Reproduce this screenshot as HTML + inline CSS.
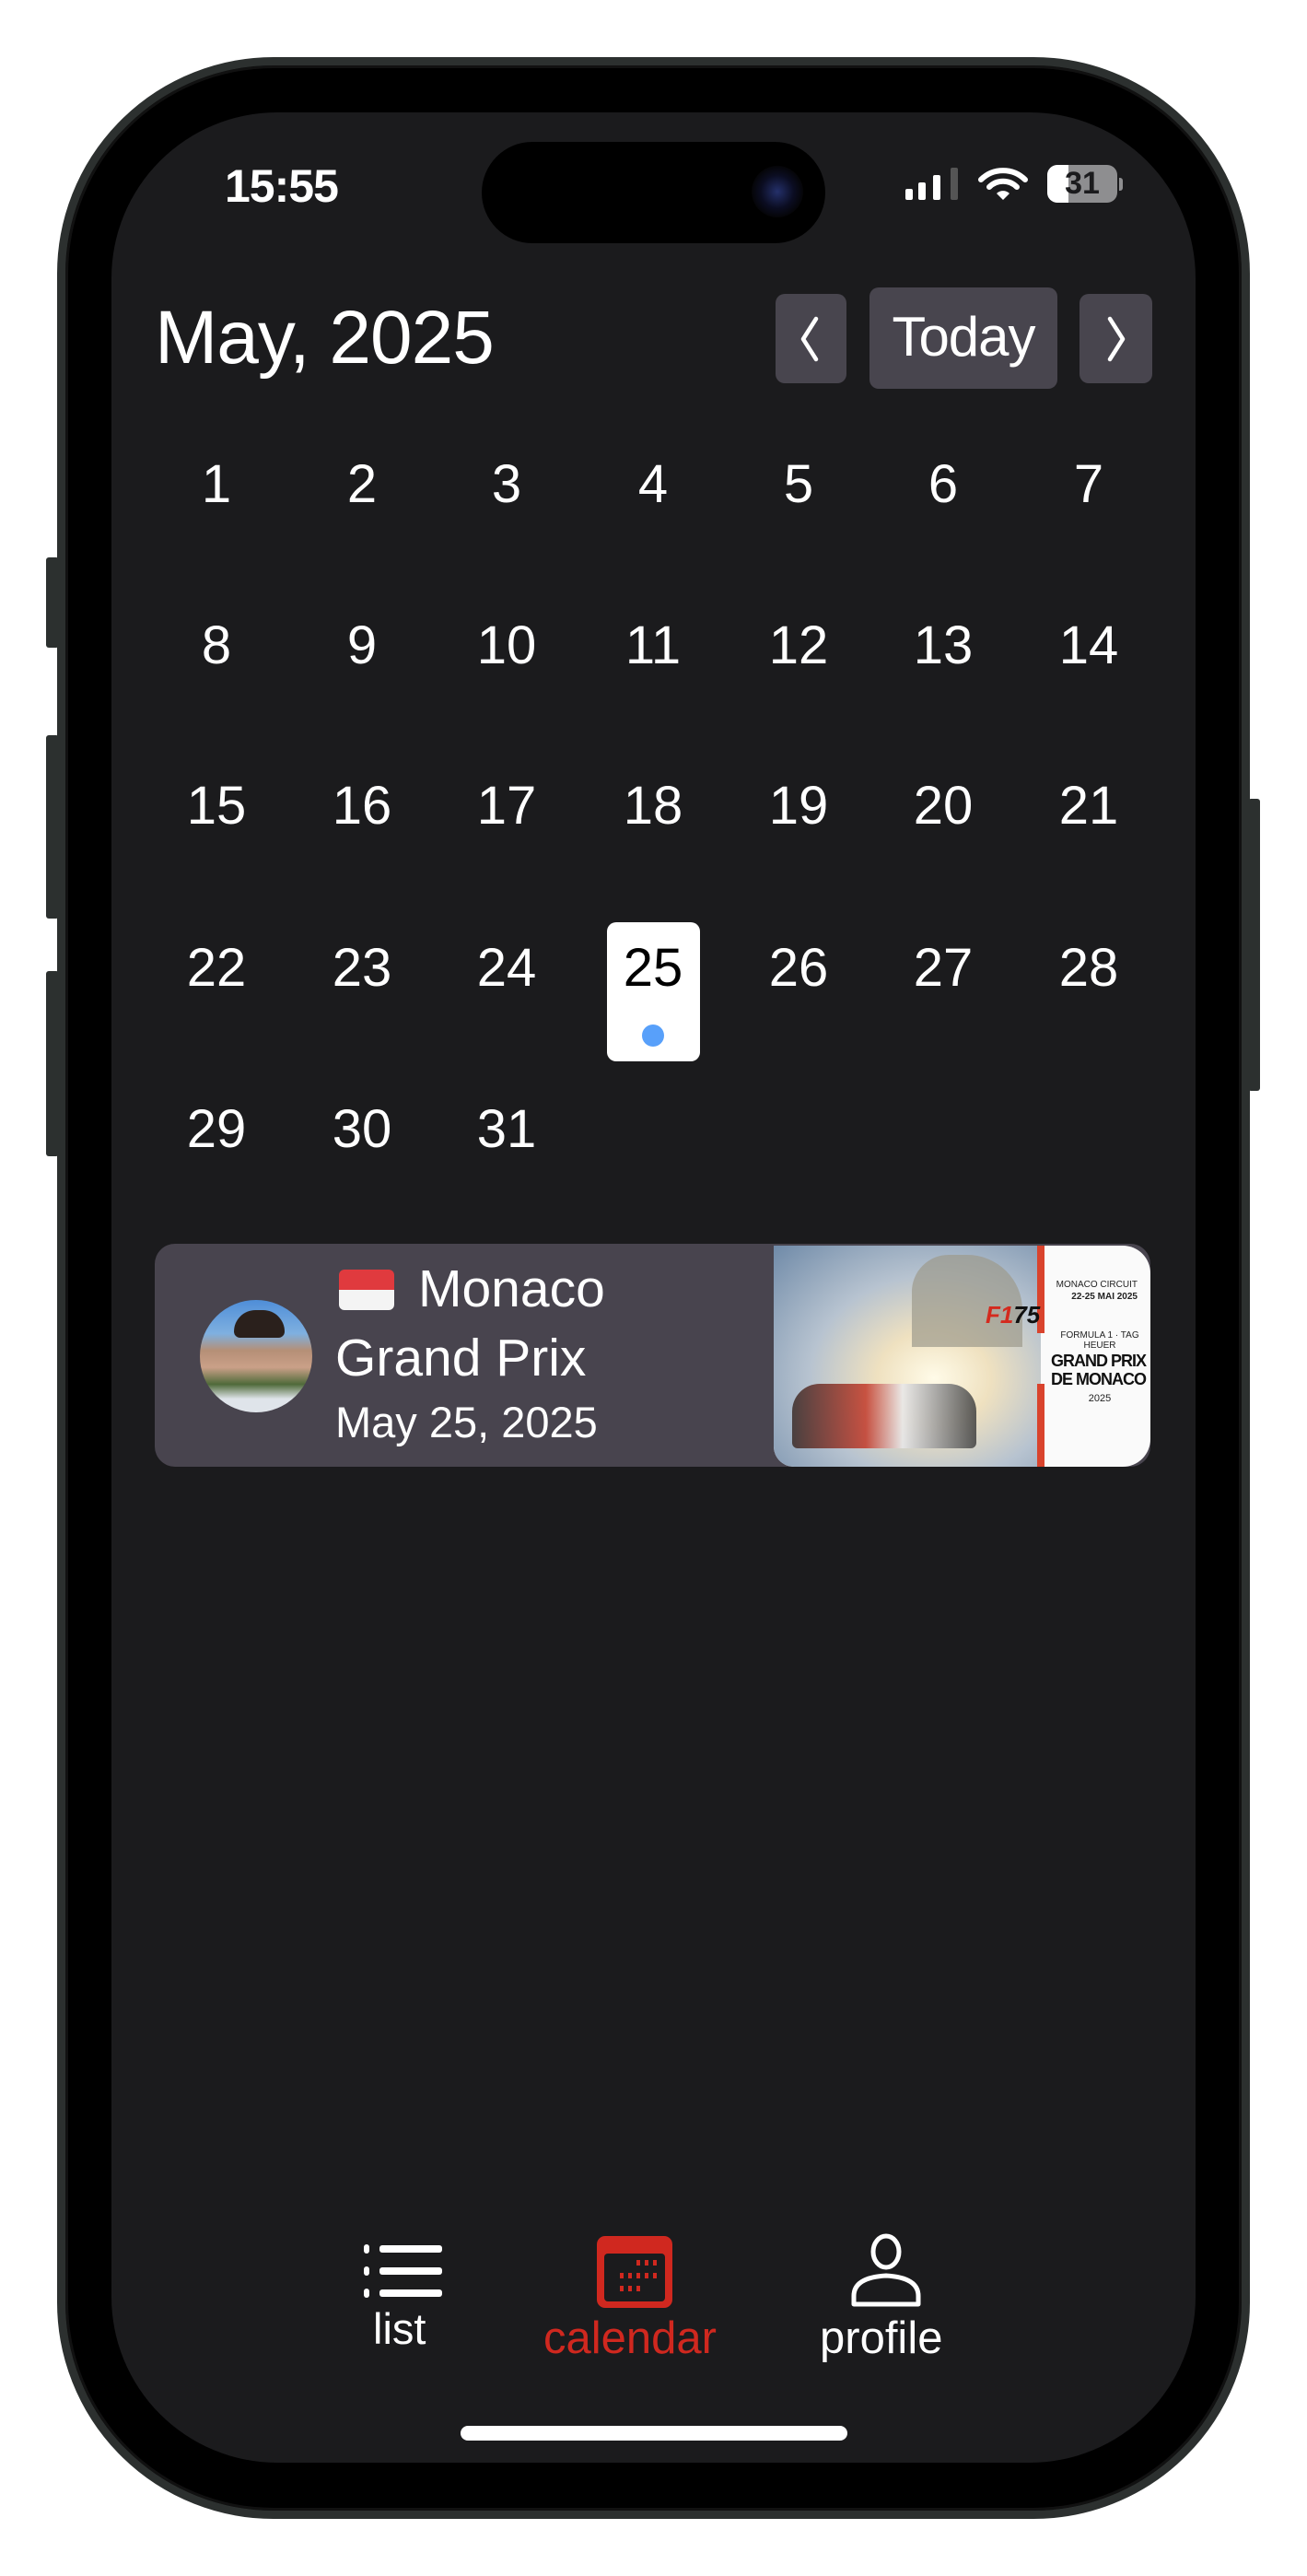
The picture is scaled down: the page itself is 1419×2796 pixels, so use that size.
<!DOCTYPE html>
<html><head><meta charset="utf-8">
<style>
*{margin:0;padding:0;box-sizing:border-box}
body{width:1419px;height:2796px;background:#fff;position:relative;overflow:hidden;font-family:"Liberation Sans",Arial,sans-serif}
.abs{position:absolute}
.frame{left:62px;top:62px;width:1295px;height:2672px;border-radius:235px;background:#000;border:9px solid #2c302f;box-shadow:inset 0 0 0 3px #111}
.screen{left:121px;top:122px;width:1177px;height:2551px;border-radius:180px;background:#1b1b1d;overflow:hidden}
.btn{background:#48454e;border-radius:10px}
.num{position:absolute;width:120px;text-align:center;font-size:58px;line-height:58px;color:#fff}
.side{background:#2c302f;border-radius:3px}
</style></head><body>
<div class="abs side" style="left:50px;top:605px;width:14px;height:98px"></div>
<div class="abs side" style="left:50px;top:798px;width:14px;height:199px"></div>
<div class="abs side" style="left:50px;top:1054px;width:14px;height:201px"></div>
<div class="abs side" style="left:1355px;top:867px;width:13px;height:317px"></div>
<div class="abs frame"></div>
<div class="abs screen"></div>

<div class="abs" style="left:523px;top:154px;width:373px;height:110px;border-radius:55px;background:#000"></div>
<div class="abs" style="left:816px;top:180px;width:56px;height:56px;border-radius:50%;background:radial-gradient(circle,#24306a 0,#0b0d22 45%,#050508 70%)"></div>

<div class="abs" style="left:244px;top:174px;font-size:50px;font-weight:bold;color:#fff;line-height:56px;letter-spacing:-1px">15:55</div>
<div class="abs" style="left:983px;top:205px;width:8px;height:12px;background:#fff;border-radius:2px"></div>
<div class="abs" style="left:997px;top:198px;width:8px;height:19px;background:#fff;border-radius:2px"></div>
<div class="abs" style="left:1013px;top:190px;width:8px;height:27px;background:#fff;border-radius:2px"></div>
<div class="abs" style="left:1032px;top:182px;width:8px;height:35px;background:#555;border-radius:2px"></div>
<svg class="abs" style="left:1062px;top:182px" width="54" height="36" viewBox="0 0 54 36">
<path d="M3 13 A34 34 0 0 1 51 13" stroke="#fff" stroke-width="6" fill="none" stroke-linecap="round"/>
<path d="M12 21 A21 21 0 0 1 42 21" stroke="#fff" stroke-width="6" fill="none" stroke-linecap="round"/>
<path d="M20 28 L27 35 L34 28 A10 10 0 0 0 20 28Z" fill="#fff"/></svg>
<div class="abs" style="left:1137px;top:179px;width:76px;height:41px;border-radius:11px;background:#8e8e90;overflow:hidden">
<div style="position:absolute;left:0;top:0;width:23px;height:41px;background:#fff"></div>
<div style="position:absolute;left:0;top:0;width:76px;text-align:center;font-size:34px;font-weight:bold;line-height:41px;color:#1b1b1d">31</div></div>
<div class="abs" style="left:1215px;top:193px;width:4px;height:14px;background:#8e8e90;border-radius:0 3px 3px 0"></div>

<div class="abs" style="left:168px;top:322px;font-size:82px;color:#fff;line-height:90px;letter-spacing:-1px">May, 2025</div>
<div class="abs btn" style="left:842px;top:319px;width:77px;height:97px"></div>
<svg class="abs" style="left:860px;top:338px" width="40" height="60"><path d="M26 8 L12 30 L26 52" stroke="#fff" stroke-width="4.5" fill="none" stroke-linecap="round" stroke-linejoin="round"/></svg>
<div class="abs btn" style="left:944px;top:312px;width:204px;height:110px;text-align:center;font-size:60px;line-height:108px;color:#fff;letter-spacing:-1px">Today</div>
<div class="abs btn" style="left:1172px;top:319px;width:79px;height:97px"></div>
<svg class="abs" style="left:1192px;top:338px" width="40" height="60"><path d="M13 8 L27 30 L13 52" stroke="#fff" stroke-width="4.5" fill="none" stroke-linecap="round" stroke-linejoin="round"/></svg>

<div class="abs" style="left:659px;top:1001px;width:101px;height:151px;border-radius:10px;background:#fff"></div>
<div class="abs" style="left:697px;top:1112px;width:24px;height:24px;border-radius:50%;background:#58a0fa"></div>

<div class="num" style="left:175px;top:497px">1</div><div class="num" style="left:333px;top:497px">2</div><div class="num" style="left:490px;top:497px">3</div><div class="num" style="left:649px;top:497px">4</div><div class="num" style="left:807px;top:497px">5</div><div class="num" style="left:964px;top:497px">6</div><div class="num" style="left:1122px;top:497px">7</div>
<div class="num" style="left:175px;top:672px">8</div><div class="num" style="left:333px;top:672px">9</div><div class="num" style="left:490px;top:672px">10</div><div class="num" style="left:649px;top:672px">11</div><div class="num" style="left:807px;top:672px">12</div><div class="num" style="left:964px;top:672px">13</div><div class="num" style="left:1122px;top:672px">14</div>
<div class="num" style="left:175px;top:846px">15</div><div class="num" style="left:333px;top:846px">16</div><div class="num" style="left:490px;top:846px">17</div><div class="num" style="left:649px;top:846px">18</div><div class="num" style="left:807px;top:846px">19</div><div class="num" style="left:964px;top:846px">20</div><div class="num" style="left:1122px;top:846px">21</div>
<div class="num" style="left:175px;top:1022px">22</div><div class="num" style="left:333px;top:1022px">23</div><div class="num" style="left:490px;top:1022px">24</div><div class="num" style="left:649px;top:1022px;color:#000">25</div><div class="num" style="left:807px;top:1022px">26</div><div class="num" style="left:964px;top:1022px">27</div><div class="num" style="left:1122px;top:1022px">28</div>
<div class="num" style="left:175px;top:1197px">29</div><div class="num" style="left:333px;top:1197px">30</div><div class="num" style="left:490px;top:1197px">31</div>

<div class="abs" style="left:168px;top:1350px;width:1081px;height:242px;border-radius:22px;background:#48444e;overflow:hidden">
 <div style="position:absolute;left:49px;top:61px;width:122px;height:122px;border-radius:50%;background:linear-gradient(180deg,#4f8ed8 0,#7fb0e0 30%,#b58f76 45%,#caa088 60%,#4f6a3a 75%,#dfe4ea 88%)"></div>
 <div style="position:absolute;left:86px;top:72px;width:55px;height:30px;border-radius:28px 28px 8px 8px;background:#2a201c"></div>
 <div style="position:absolute;left:200px;top:28px;width:60px;height:44px;border-radius:6px;overflow:hidden"><div style="height:22px;background:#e03a3e"></div><div style="height:22px;background:#f4f4f4"></div></div>
 <div style="position:absolute;left:286px;top:16px;font-size:57px;line-height:66px;color:#fff">Monaco</div>
 <div style="position:absolute;left:196px;top:91px;font-size:57px;line-height:66px;color:#fff">Grand Prix</div>
 <div style="position:absolute;left:196px;top:166px;font-size:47px;line-height:56px;color:#fff">May 25, 2025</div>
 <div style="position:absolute;left:672px;top:2px;width:409px;height:240px;border-radius:0 30px 30px 22px;overflow:hidden;background:#fafafa">
  <div style="position:absolute;left:0;top:0;width:290px;height:240px;background:radial-gradient(ellipse at 60% 60%,#fffbe8 0,#efe1c0 25%,#b7c3d0 55%,#6f8aa8 100%)"></div>
  <div style="position:absolute;left:150px;top:10px;width:120px;height:100px;background:#9c9a8c;border-radius:40px 60px 0 0;opacity:.7"></div>
  <div style="position:absolute;left:20px;top:150px;width:200px;height:70px;background:linear-gradient(90deg,#3a2c28,#c33a2a 40%,#e8e8ea 60%,#404040);border-radius:30px 30px 6px 6px;opacity:.85"></div>
  <div style="position:absolute;left:286px;top:0;width:8px;height:95px;background:#d9432d"></div>
  <div style="position:absolute;left:286px;top:150px;width:8px;height:90px;background:#d9432d"></div>
  <div style="position:absolute;left:300px;top:115px;width:105px;text-align:center;font-size:18px;font-weight:bold;line-height:20px;color:#111;letter-spacing:-1px;white-space:nowrap">GRAND PRIX<br>DE MONACO</div>
  <div style="position:absolute;left:304px;top:92px;width:100px;text-align:center;font-size:10px;color:#222">FORMULA 1 · TAG HEUER</div>
  <div style="position:absolute;left:230px;top:60px;font-size:26px;font-weight:bold;font-style:italic;color:#d42a1e">F1<span style="color:#111">75</span></div>
  <div style="position:absolute;left:300px;top:36px;width:95px;text-align:right;font-size:10px;line-height:13px;color:#222;white-space:nowrap">MONACO CIRCUIT<br><b>22-25 MAI 2025</b></div>
  <div style="position:absolute;left:304px;top:160px;width:100px;text-align:center;font-size:11px;color:#222">2025</div>
 </div>
</div>

<svg class="abs" style="left:393px;top:2430px" width="90" height="70">
<g fill="#fff"><rect x="2" y="6" width="6" height="10" rx="3"/><rect x="2" y="30" width="6" height="10" rx="3"/><rect x="2" y="54" width="6" height="10" rx="3"/>
<rect x="19" y="7" width="68" height="8" rx="3"/><rect x="19" y="31" width="68" height="8" rx="3"/><rect x="19" y="55" width="68" height="8" rx="3"/></g></svg>
<div class="abs" style="left:405px;top:2498px;font-size:47px;line-height:60px;color:#fff">list</div>
<svg class="abs" style="left:646px;top:2425px" width="86" height="82">
<rect x="2" y="2" width="82" height="78" rx="9" fill="#d0281f"/>
<rect x="10" y="21" width="66" height="52" rx="4" fill="#1b1b1d"/>
<g fill="#d0281f"><rect x="45" y="28" width="4" height="6"/><rect x="54" y="28" width="4" height="6"/><rect x="63" y="28" width="4" height="6"/>
<rect x="27" y="42" width="4" height="6"/><rect x="36" y="42" width="4" height="6"/><rect x="45" y="42" width="4" height="6"/><rect x="54" y="42" width="4" height="6"/><rect x="63" y="42" width="4" height="6"/>
<rect x="27" y="56" width="4" height="6"/><rect x="36" y="56" width="4" height="6"/><rect x="45" y="56" width="4" height="6"/></g></svg>
<div class="abs" style="left:590px;top:2508px;font-size:49px;line-height:60px;color:#d0281f">calendar</div>
<svg class="abs" style="left:922px;top:2424px" width="80" height="82">
<ellipse cx="40" cy="20" rx="14" ry="17" fill="none" stroke="#fff" stroke-width="5"/>
<path d="M5 77 L5 68 Q5 48 40 46 Q75 48 75 68 L75 77 Z" fill="none" stroke="#fff" stroke-width="5" stroke-linejoin="round"/></svg>
<div class="abs" style="left:890px;top:2508px;font-size:49px;line-height:60px;color:#fff">profile</div>

<div class="abs" style="left:500px;top:2633px;width:420px;height:16px;border-radius:8px;background:#fff"></div>
</body></html>
